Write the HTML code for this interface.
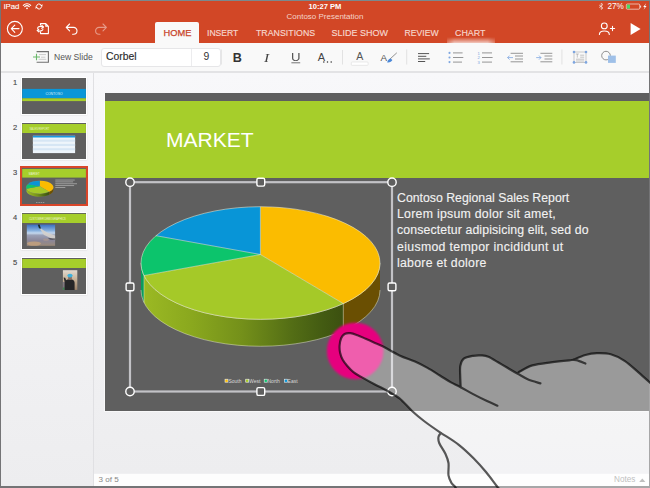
<!DOCTYPE html>
<html><head><meta charset="utf-8">
<style>
*{margin:0;padding:0;box-sizing:border-box}
html,body{width:650px;height:488px;overflow:hidden}
body{background:#747476;position:relative;font-family:"Liberation Sans",sans-serif}
.a{position:absolute}
#hdr{left:1px;top:1px;width:648px;height:41.8px;background:#d24726}
#tb{left:1px;top:42.8px;width:648px;height:28.4px;background:#f9f9f9}
#tbl{left:1px;top:71.2px;width:648px;height:1.6px;background:#e3e3e5}
#panel{left:1px;top:72.8px;width:92px;height:413px;background:linear-gradient(#f8f8fa,#ededef)}
#div{left:93px;top:72.8px;width:1px;height:413px;background:#e0e0e3}
#main{left:94px;top:72.8px;width:555px;height:400px;background:linear-gradient(#f8f8fa,#ededef)}
#bbar{left:94px;top:472.7px;width:555px;height:13.1px;background:#fdfdfd;border-top:1px solid #f0f0f2}
.st{color:#fff;font-size:8px;line-height:1;white-space:nowrap}
.tab{color:#f6d8cf;-webkit-text-stroke:0.15px #f6d8cf;font-size:9.4px;line-height:1;white-space:nowrap;top:28.7px}
.thumb{left:22.2px;width:63.7px;height:36px;background:#5f5f5f;box-shadow:0 0 0 1px #ffffff,0 0.5px 1.5px 1px rgba(0,0,0,0.12)}
.bt{left:397px;font-size:12.3px;color:#f2f2f2;-webkit-text-stroke:0.12px #f2f2f2;line-height:1;white-space:nowrap}
.num{left:13px;font-size:7.5px;color:#4a4a4a;line-height:1;-webkit-text-stroke:0.15px #4a4a4a}
</style></head><body>
<div class="a" style="left:0;top:0;width:650px;height:1px;background:#7a898d"></div>
<div id="hdr" class="a"></div>
<div id="tb" class="a"></div>
<div id="tbl" class="a"></div>
<div id="panel" class="a"></div>
<div id="div" class="a"></div>
<div id="main" class="a"></div>
<div id="bbar" class="a"></div>

<!-- status bar -->
<div class="a st" style="left:3.8px;top:2.9px;font-size:7.8px;-webkit-text-stroke:0.1px #fff">iPad</div>
<div class="a st" style="left:308.5px;top:2.6px;font-weight:bold;font-size:7.6px">10:27 PM</div>
<div class="a st" style="left:286.5px;top:13.2px;font-size:8px;color:#f5d3c8">Contoso Presentation</div>
<div class="a st" style="left:607.4px;top:2.6px;font-size:8.2px">27%</div>

<!-- tabs -->
<div class="a" style="left:447px;top:36.5px;width:47.5px;height:6.3px;background:linear-gradient(rgba(255,255,255,0),rgba(255,255,255,0.7));-webkit-mask-image:linear-gradient(90deg,rgba(0,0,0,0.4),#000 15%,#000 85%,rgba(0,0,0,0.4))"></div>
<div class="a" style="left:155px;top:22.3px;width:43.5px;height:21px;background:#f9f9f9;border-radius:2px 2px 0 0"></div>
<div class="a tab" style="left:163.5px;color:#c8432a;font-size:9.3px;-webkit-text-stroke:0.25px #c8432a">HOME</div>
<div class="a tab" style="left:207px;font-size:8.6px;top:29.2px">INSERT</div>
<div class="a tab" style="left:256px;font-size:8.8px;top:29.1px">TRANSITIONS</div>
<div class="a tab" style="left:331.6px;font-size:9px;top:29px">SLIDE SHOW</div>
<div class="a tab" style="left:404.5px;font-size:8.65px;top:29.2px">REVIEW</div>
<div class="a tab" style="left:455px;font-size:8.9px;top:29px">CHART</div>

<!-- toolbar -->
<div class="a" style="left:54px;top:53.1px;font-size:8.6px;color:#555;line-height:1;white-space:nowrap">New Slide</div>
<div class="a" style="left:101px;top:47.6px;width:119.6px;height:19.8px;background:#fff;border:1px solid #e6e6e8;border-radius:3px"></div>
<div class="a" style="left:191px;top:48.6px;width:1px;height:17.8px;background:#ececee"></div>
<div class="a" style="left:106px;top:52.3px;font-size:10.4px;color:#2a2a2a;-webkit-text-stroke:0.15px #2a2a2a;line-height:1">Corbel</div>
<div class="a" style="left:203.4px;top:52.3px;font-size:10.4px;color:#333;line-height:1">9</div>


<!-- toolbar icons -->
<div class="a" style="left:232.8px;top:51.6px;font-size:12.6px;font-weight:bold;color:#333;line-height:1">B</div>
<div class="a" style="left:263.6px;top:51.4px;font-size:13px;font-style:italic;font-family:'Liberation Serif',serif;color:#444;transform:scaleX(1.2);transform-origin:0 0;line-height:1">I</div>
<div class="a" style="left:290.8px;top:51.7px;font-size:11.2px;color:#555;line-height:1;transform:scaleX(1.18);transform-origin:0 0">U</div>
<div class="a" style="left:317.8px;top:52px;font-size:11px;color:#444;line-height:1">A</div>
<div class="a" style="left:356.3px;top:50.6px;font-size:10.6px;color:#555;line-height:1">A</div>
<div class="a" style="left:380.6px;top:53.2px;font-size:9.8px;color:#555;line-height:1">A</div>
<svg class="a" style="left:0;top:0" width="650" height="488" viewBox="0 0 650 488">
<rect x="221" y="49.5" width="1" height="15" fill="#e6e6e6"/>
<rect x="342" y="50" width="1" height="14.5" fill="#e2e2e2"/>
<rect x="406.2" y="49.5" width="1" height="15" fill="#e2e2e2"/>
<rect x="561.4" y="49.5" width="1" height="15" fill="#e2e2e2"/>
<path d="M291.4 62.8H300.2" stroke="#666" stroke-width="0.9"/>
<g fill="#333"><circle cx="323.8" cy="62.1" r="0.75"/><circle cx="327.5" cy="62.1" r="0.75"/><circle cx="331.2" cy="62.1" r="0.75"/></g>
<rect x="351.3" y="62" width="16.8" height="3.3" rx="0.8" fill="#fff" stroke="#dcdcdc" stroke-width="0.6"/>
<path d="M388.5 60.4L396.8 52.8" stroke="#777" stroke-width="0.8"/>
<path d="M387.2 62.4C387.6 60.3 388.6 59 390.6 58.4L392.4 60.1C391.6 62 389.6 62.6 387.2 62.4Z" fill="#4a88d8"/>
<g stroke="#555" stroke-width="1">
<path d="M418 53.6H429.1 M418 56.3H426.3 M418 58.9H429.8 M418 61.5H425.2"/>
</g>
<g stroke="#8a8a8a" stroke-width="0.9">
<path d="M453 52.9H462.6 M453 57.5H463.3 M453 62.1H462 M482 52.9H492 M482 57.5H492.6 M482 62.1H492"/>
<path d="M510.6 53.3H523 M515 56H523 M515 59H523 M510.6 61.8H523"/>
<path d="M540.4 53.3H552.3 M544.5 56H552.3 M544.5 59H552.3 M540.4 61.8H552.3"/>
</g>
<g fill="#7ea6e0"><circle cx="449.5" cy="52.9" r="1.05"/><circle cx="449.5" cy="57.5" r="1.05"/><circle cx="449.5" cy="62.1" r="1.05"/></g>
<g font-family="Liberation Sans" font-size="4.2" fill="#7ea6e0"><text x="477.5" y="54.5">1</text><text x="477.5" y="59.1">2</text><text x="477.5" y="63.7">3</text></g>
<g fill="none" stroke="#7ea6e0" stroke-width="0.8"><path d="M513 57.6H507.6 M509.6 55.6L507.6 57.6L509.6 59.6"/><path d="M536.2 57.6H541 M539 55.6L541 57.6L539 59.6"/></g>
<rect x="574" y="52" width="12" height="10.4" fill="none" stroke="#a8a8a8" stroke-width="0.6"/>
<g fill="#7ea6e0"><circle cx="574" cy="52" r="1.3"/><circle cx="586" cy="52" r="1.3"/><circle cx="574" cy="62.4" r="1.3"/><circle cx="586" cy="62.4" r="1.3"/></g>
<path d="M575.8 54H578.8 M577.3 54V57.6 M580.2 55.2H584.2 M580.2 57.2H584.2 M576 59.2H584.2 M576 61H584.2" stroke="#8c8c8c" stroke-width="0.5"/>
<circle cx="606" cy="55.6" r="4.3" fill="none" stroke="#777" stroke-width="0.8"/>
<rect x="608" y="55.6" width="7.8" height="7.3" fill="#9fc0e8"/>
</svg>
<div class="a" style="left:98.6px;top:476.2px;font-size:8.1px;color:#888;line-height:1">3 of 5</div>
<div class="a" style="left:614px;top:476.2px;font-size:8.2px;color:#9a9a9a;line-height:1">Notes</div>
<svg class="a" style="left:0;top:0" width="650" height="488"><polygon points="639.2,482 642.3,478.5 645.4,482" fill="#9a9a9a"/></svg>

<!-- thumbnails -->
<div class="a num" style="top:78.6px">1</div>
<div class="a num" style="top:124.2px">2</div>
<div class="a num" style="top:168.8px">3</div>
<div class="a num" style="top:213.6px">4</div>
<div class="a num" style="top:258.6px">5</div>

<div class="a thumb" style="top:78.2px"></div>
<div class="a thumb" style="top:123px"></div>
<div class="a" style="left:19.7px;top:165.5px;width:68.6px;height:40.9px;border:2px solid #d9462a;background:#fff"></div>
<div class="a thumb" style="top:168px;box-shadow:none"></div>
<div class="a thumb" style="top:213px"></div>
<div class="a thumb" style="top:258px"></div>


<svg class="a" style="left:0;top:0" width="650" height="488" viewBox="0 0 650 488">
<defs>
<linearGradient id="sky" x1="0" y1="0" x2="0" y2="1"><stop offset="0" stop-color="#3a6fc0"/><stop offset="0.28" stop-color="#86b0de"/><stop offset="0.4" stop-color="#c4d8ee"/><stop offset="0.5" stop-color="#9aa0b6"/><stop offset="0.75" stop-color="#8a8698"/><stop offset="1" stop-color="#9a8a7a"/></linearGradient>
</defs>
<!-- t1 -->
<rect x="22.2" y="88.9" width="63.7" height="9.4" fill="#0a96d8"/>
<rect x="22.2" y="98.3" width="63.7" height="2.8" fill="#a6ce2b"/>
<text x="54" y="95.2" font-family="Liberation Sans" font-size="3.4" fill="#dff0fa" text-anchor="middle">CONTOSO</text>
<!-- t2 -->
<rect x="22.2" y="124" width="63.7" height="9" fill="#a6ce2b"/>
<text x="29.5" y="130" font-family="Liberation Sans" font-size="2.6" fill="#e8f4c8">SALES REPORT</text>
<rect x="32.9" y="135.8" width="42.2" height="17.3" fill="#eef5fb"/>
<rect x="32.9" y="135.8" width="42.2" height="1.7" fill="#1a9ae0"/>
<rect x="32.9" y="139.6" width="42.2" height="2.1" fill="#d6e6f4"/>
<rect x="32.9" y="143.9" width="42.2" height="2.1" fill="#d6e6f4"/>
<rect x="32.9" y="148.2" width="42.2" height="2.1" fill="#d6e6f4"/>
<!-- t3 -->
<rect x="22.2" y="168.9" width="63.7" height="8.7" fill="#a6ce2b"/>
<text x="28.8" y="174.6" font-family="Liberation Sans" font-size="2.6" fill="#eef6d8">MARKET</text>
<use href="#pie" transform="translate(22.2 168) scale(0.1134) translate(-105.5 -93.4)"/>
<g fill="#d0d0d0" opacity="0.6"><rect x="55.3" y="179.6" width="19.4" height="0.9"/><rect x="55.3" y="181.45" width="17.8" height="0.9"/><rect x="55.3" y="183.3" width="21.7" height="0.9"/><rect x="55.3" y="185.15" width="18.8" height="0.9"/><rect x="55.3" y="187" width="10" height="0.9"/></g>
<g fill="#bbb"><rect x="36" y="202.4" width="1.5" height="0.6"/><rect x="38.4" y="202.4" width="1.5" height="0.6"/><rect x="40.6" y="202.4" width="1.5" height="0.6"/><rect x="42.8" y="202.4" width="1.5" height="0.6"/></g>
<!-- t4 -->
<rect x="22.2" y="213.9" width="63.7" height="9.1" fill="#a6ce2b"/>
<text x="29" y="219.6" font-family="Liberation Sans" font-size="2.6" fill="#eef6d8">CUSTOMER DEMOGRAPHICS</text>
<rect x="26.8" y="224.6" width="28.3" height="21.2" fill="url(#sky)"/>
<ellipse cx="34" cy="243.6" rx="7" ry="2.2" fill="#c8a47c" opacity="0.75"/>
<ellipse cx="46" cy="239.8" rx="3" ry="1.2" fill="#b09a88" opacity="0.6"/>
<path d="M39.4 227.6L47 232.6L55.1 235.6V240.2L50 237.8L44 235L40.6 230Z" fill="#d4d0cc" opacity="0.9"/>
<path d="M48 238.2L55.1 238.6V239.8L50 239.6Z" fill="#303034" opacity="0.8"/>
<path d="M37.8 224.8L39.6 224.6L41 228.8L39 228.2Z" fill="#1a2a26"/>
<!-- t5 -->
<rect x="22.2" y="259" width="63.7" height="9" fill="#a6ce2b"/>
<defs><linearGradient id="ph5" x1="0" y1="0" x2="0" y2="1"><stop offset="0" stop-color="#e2dad0"/><stop offset="0.45" stop-color="#c8b49a"/><stop offset="1" stop-color="#9a8068"/></linearGradient></defs>
<rect x="62.9" y="270.2" width="14.4" height="19.7" fill="url(#ph5)"/>
<rect x="62.9" y="282" width="2" height="7.9" fill="#6a6a80" opacity="0.7"/>
<rect x="62.9" y="287.5" width="1.6" height="2.4" fill="#3a8a50"/>
<path d="M64.6 289.9V283C64.6 280.6 66.4 279.2 70 279.2C73.2 279.2 74.6 280.8 74.6 283V289.9Z" fill="#262628"/>
<path d="M63.6 277.4L65.2 277.8L66.6 281.6L64.8 282.4Z" fill="#2a2a2c"/>
<circle cx="70" cy="278" r="2" fill="#8a6e62"/>
<ellipse cx="70" cy="275.6" rx="2.6" ry="1.9" fill="#3fb2dc"/>
</svg>

<!-- slide -->
<div class="a" style="left:105.2px;top:93.4px;width:544px;height:317.4px;background:#5f5f5f;box-shadow:-1px 1px 0 0 rgba(255,255,255,0.55)"></div>
<div class="a" style="left:105.2px;top:101.4px;width:544px;height:76.4px;background:#a6ce2b"></div>
<div class="a" style="left:166px;top:128.6px;font-size:21px;color:#fff;line-height:1;white-space:nowrap">MARKET</div>


<svg class="a" style="left:0;top:0" width="650" height="488" viewBox="0 0 650 488">
<g fill="none" stroke="#fff" stroke-width="1.1" stroke-linecap="round" stroke-linejoin="round">
 <circle cx="14.85" cy="28.85" r="7.5"/>
 <path d="M11.3 28.6H19 M14.8 25.1L11.3 28.6L14.8 32.3"/>
 <path d="M40.5 25V23.6H45.8L48.4 26.3V33.6H40.5V32 M45.8 23.6V26.3H48.4"/>
 <path d="M43.2 27C41.5 26.2 39.8 26.2 38.7 26.8C38 27.2 37.7 27.8 37.6 28.4 M37.4 30.4C39 31.2 40.8 31.2 41.9 30.6C42.6 30.2 42.9 29.6 43 29" />
 <path d="M41.8 25.4L43.4 27L41.8 28.4 M38.8 29.2L37.2 30.4L38.8 31.8"/>
 <path d="M66.6 27.4H73.6A3.4 3.4 0 0 1 73.6 34.2H72.6 M69.6 24L66.2 27.4L69.6 30.8"/>
 <g opacity="0.45"><path d="M106 27.4H99A3.4 3.4 0 0 0 99 34.2H100 M103 24L106.4 27.4L103 30.8"/></g>
 <circle cx="604.3" cy="25.9" r="2.9"/>
 <path d="M599.4 34.4C599.4 29.8 609.3 29.8 609.3 34.4"/>
 <path d="M610.4 28.5H614.6 M612.5 26.4V30.6"/>
</g>
<polygon points="630.6,22.9 640.6,28.9 630.6,34.9" fill="#fff"/>
<!-- status -->
<g fill="none" stroke="#fff" stroke-width="0.9" stroke-linecap="round">
 <path d="M23.3 5.3A5.3 5.3 0 0 1 30.7 5.3 M24.7 6.7A3.3 3.3 0 0 1 29.3 6.7" stroke-width="1.1"/>
 <path d="M36.6 5.9A2.5 2.5 0 0 1 41.2 5.2 M41.4 7.1A2.5 2.5 0 0 1 36.8 7.8" stroke-width="1"/>
 <path d="M599.4 5.2L603 8L601.2 9.4V3.2L603 4.6L599.4 7.4" stroke-width="0.7" opacity="0.8"/>
</g>
<circle cx="27" cy="8.3" r="0.9" fill="#fff"/><polygon points="40.2,5.4 42.6,4.2 42.2,6.9" fill="#fff"/><polygon points="37.8,7.6 35.4,8.8 35.8,6.1" fill="#fff"/>
<rect x="626.3" y="4" width="13.4" height="5.2" rx="1" fill="none" stroke="#fff" stroke-width="0.7" opacity="0.85"/>
<rect x="626.9" y="4.6" width="3.1" height="4" fill="#4cd964"/>
<rect x="640.1" y="5.6" width="1" height="2" fill="#fff" opacity="0.85"/>
<polygon points="646.2,3.2 643.2,7 644.8,7 643.6,9.8 646.6,5.9 645,5.9" fill="#fff"/>
<!-- new slide icon -->
<path d="M36.6 51.6H48.4V62.2H36.6" fill="none" stroke="#707070" stroke-width="1.1"/>
<path d="M39 54.6H46 M41 57.2H45.4 M38.6 59.3H46.2" stroke="#b8b8b8" stroke-width="0.7"/>
<path d="M33 57H40 M36.5 53.8V60.3" stroke="#6cb86c" stroke-width="1.1"/>
</svg>

<div class="a bt" style="top:191.8px;letter-spacing:0px">Contoso Regional Sales Report</div>
<div class="a bt" style="top:208.1px;letter-spacing:0.27px">Lorem ipsum dolor sit amet,</div>
<div class="a bt" style="top:224.4px;letter-spacing:0.12px">consectetur adipisicing elit, sed do</div>
<div class="a bt" style="top:240.7px;letter-spacing:0.33px">eiusmod tempor incididunt ut</div>
<div class="a bt" style="top:257px;letter-spacing:0.26px">labore et dolore</div>
<svg class="a" style="left:0;top:0" width="650" height="488" viewBox="0 0 650 488">
<defs>
<linearGradient id="lgside" x1="141" y1="0" x2="343" y2="0" gradientUnits="userSpaceOnUse">
<stop offset="0" stop-color="#9cba24"/><stop offset="0.25" stop-color="#8aa81e"/><stop offset="0.5" stop-color="#74901a"/><stop offset="0.75" stop-color="#536d15"/><stop offset="0.9" stop-color="#435b12"/><stop offset="1" stop-color="#3c5010"/>
</linearGradient>
<filter id="blur1" x="-20%" y="-20%" width="140%" height="140%"><feGaussianBlur stdDeviation="0.8"/></filter>
</defs>
<g id="pie">
<path d="M141.00 263.00 A119.5 56.3 0 0 0 144.00 275.54 L144.00 302.54 A119.5 56.3 0 0 1 141.00 290.00 Z" fill="#0a9c5c"/>
<path d="M144.00 275.54 A119.5 56.3 0 0 0 343.30 303.59 L343.30 330.59 A119.5 56.3 0 0 1 144.00 302.54 Z" fill="url(#lgside)"/>
<path d="M343.30 303.59 A119.5 56.3 0 0 0 380.00 263.00 L380.00 290.00 A119.5 56.3 0 0 1 343.30 330.59 Z" fill="#6a4f02"/>
<path d="M141.00 263.00 A119.5 56.3 0 0 0 380.00 263.00 M141.00 290.00 A119.5 56.3 0 0 0 380.00 290.00 M343.30 303.59 L343.30 330.59 M144.00 275.54 L144.00 302.54" fill="none" stroke="#e8ecc8" stroke-width="0.6" opacity="0.8"/>
<path d="M260.40 254.50 L260.40 206.70 A119.5 56.3 0 0 1 343.30 303.59 Z" fill="#fbbc00"/>
<path d="M260.40 254.50 L343.30 303.59 A119.5 56.3 0 0 1 144.00 275.54 Z" fill="#a5c928"/>
<path d="M260.40 254.50 L144.00 275.54 A119.5 56.3 0 0 1 156.00 235.69 Z" fill="#0cc46c"/>
<path d="M260.40 254.50 L156.00 235.69 A119.5 56.3 0 0 1 260.40 206.70 Z" fill="#0895d7"/>
<path d="M260.40 254.50 L260.40 206.70 M260.40 254.50 L343.30 303.59 M260.40 254.50 L144.00 275.54 M260.40 254.50 L156.00 235.69" fill="none" stroke="#f4f4dc" stroke-width="0.6" opacity="0.85"/>
<ellipse cx="260.5" cy="263.0" rx="119.5" ry="56.3" fill="none" stroke="#f4f4dc" stroke-width="0.6" opacity="0.85"/>
</g>
<!-- legend -->
<g font-family="Liberation Sans" font-size="5" fill="#d8d8d8" transform="translate(0 0.6)">
<rect x="225" y="378.6" width="3" height="3" fill="#fbbc00" stroke="#eee" stroke-width="0.6"/><text x="228.4" y="382.4">South</text>
<rect x="245.7" y="378.6" width="3" height="3" fill="#a5c928" stroke="#eee" stroke-width="0.6"/><text x="249" y="382.4">West</text>
<rect x="264.2" y="378.6" width="3" height="3" fill="#0cc46c" stroke="#eee" stroke-width="0.6"/><text x="267.5" y="382.4">North</text>
<rect x="284.3" y="378.6" width="3" height="3" fill="#0895d7" stroke="#eee" stroke-width="0.6"/><text x="287.6" y="382.4">East</text>
</g>
<!-- selection -->
<g fill="none" stroke="#c2c2c6" stroke-width="2.2">
<rect x="130" y="182.2" width="262" height="209.3"/>
</g>
<g fill="#5f5f5f" stroke="#fff" stroke-width="1.4">
<circle cx="130" cy="182.2" r="4.2"/><circle cx="392" cy="182.2" r="4.2"/><circle cx="130" cy="391.5" r="4.2"/><circle cx="392" cy="391.5" r="4.2"/>
<rect x="256.9" y="178.3" width="7.8" height="7.8" rx="1.5"/><rect x="256.9" y="387.6" width="7.8" height="7.8" rx="1.5"/>
<rect x="126.1" y="282.95" width="7.8" height="7.8" rx="1.5"/><rect x="388.1" y="282.95" width="7.8" height="7.8" rx="1.5"/>
</g>
<!-- touch -->
<circle cx="355.2" cy="351" r="28.3" fill="#e6007e" filter="url(#blur1)"/>
<!-- hand -->
<path d="M502.0 492.0 C501.1 491.0 499.5 489.5 496.9 486.2 C494.3 482.9 490.0 476.9 486.2 472.3 C482.4 467.7 478.4 463.1 473.8 458.5 C469.2 453.9 464.1 449.0 458.5 444.6 C452.9 440.2 445.8 436.2 440.0 432.3 C434.2 428.4 428.7 424.6 424.0 421.0 C419.3 417.4 415.9 414.5 411.8 410.7 C407.7 406.9 403.6 401.7 399.5 398.4 C395.4 395.1 391.3 393.0 387.2 390.7 C383.1 388.4 379.2 386.8 374.9 384.5 C370.5 382.2 364.7 379.0 361.1 376.9 C357.5 374.8 355.7 373.9 353.4 372.1 C351.1 370.3 349.1 368.1 347.3 366.0 C345.5 363.9 343.9 362.0 342.7 359.8 C341.5 357.6 340.6 355.1 340.1 352.7 C339.6 350.3 339.4 347.9 339.6 345.5 C339.8 343.1 340.3 340.2 341.1 338.3 C341.9 336.4 343.1 334.9 344.6 334.0 C346.2 333.1 348.2 333.0 350.4 333.2 C352.5 333.4 354.9 334.3 357.5 335.2 C360.1 336.1 363.0 337.6 365.7 338.8 C368.4 340.0 371.2 341.2 373.9 342.4 C376.6 343.6 377.8 343.8 382.1 346.0 C386.4 348.2 394.0 352.8 399.5 355.4 C405.0 358.0 410.3 359.5 415.0 361.6 C419.7 363.7 423.4 365.6 427.5 367.9 C431.6 370.2 436.0 373.1 439.9 375.5 C443.8 377.9 447.5 380.4 451.0 382.4 C454.5 384.3 459.1 386.4 460.7 387.2 C460.6 385.2 460.3 379.1 460.2 375.5 C460.1 371.9 459.8 368.6 460.3 365.8 C460.9 363.0 461.4 360.6 463.5 358.9 C465.6 357.2 470.2 356.4 473.2 355.8 C476.2 355.2 479.0 355.2 481.5 355.4 C484.0 355.6 485.6 355.6 488.4 356.8 C491.2 358.0 495.0 360.5 498.1 362.3 C501.2 364.1 503.8 365.6 507.0 367.5 C510.2 369.4 515.6 372.5 517.3 373.5 C519.8 372.1 526.7 367.2 532.3 365.4 C537.9 363.5 544.6 363.2 550.8 362.4 C556.9 361.5 565.2 360.7 569.2 360.3 C573.2 359.9 573.6 360.0 574.5 359.9 C576.3 359.1 581.7 356.1 585.4 355.0 C589.1 353.9 592.7 353.3 596.9 353.2 C601.1 353.1 606.2 353.0 610.8 354.3 C615.4 355.6 620.0 357.8 624.6 360.8 C629.2 363.8 634.3 368.7 638.5 372.3 C642.7 375.9 646.4 379.4 650.0 382.7 C653.6 386.0 658.3 390.4 660.0 392.0 L660 500 L502 500 Z" fill="rgba(255,255,255,0.37)"/>
<g fill="none" stroke="#000" stroke-width="2.2" stroke-linecap="round" opacity="0.64">
<path d="M502.0 492.0 C501.1 491.0 499.5 489.5 496.9 486.2 C494.3 482.9 490.0 476.9 486.2 472.3 C482.4 467.7 478.4 463.1 473.8 458.5 C469.2 453.9 464.1 449.0 458.5 444.6 C452.9 440.2 445.8 436.2 440.0 432.3 C434.2 428.4 428.7 424.6 424.0 421.0 C419.3 417.4 415.9 414.5 411.8 410.7 C407.7 406.9 403.6 401.7 399.5 398.4 C395.4 395.1 391.3 393.0 387.2 390.7 C383.1 388.4 379.2 386.8 374.9 384.5 C370.5 382.2 364.7 379.0 361.1 376.9 C357.5 374.8 355.7 373.9 353.4 372.1 C351.1 370.3 349.1 368.1 347.3 366.0 C345.5 363.9 343.9 362.0 342.7 359.8 C341.5 357.6 340.6 355.1 340.1 352.7 C339.6 350.3 339.4 347.9 339.6 345.5 C339.8 343.1 340.3 340.2 341.1 338.3 C341.9 336.4 343.1 334.9 344.6 334.0 C346.2 333.1 348.2 333.0 350.4 333.2 C352.5 333.4 354.9 334.3 357.5 335.2 C360.1 336.1 363.0 337.6 365.7 338.8 C368.4 340.0 371.2 341.2 373.9 342.4 C376.6 343.6 377.8 343.8 382.1 346.0 C386.4 348.2 394.0 352.8 399.5 355.4 C405.0 358.0 410.3 359.5 415.0 361.6 C419.7 363.7 423.4 365.6 427.5 367.9 C431.6 370.2 436.0 373.1 439.9 375.5 C443.8 377.9 447.5 380.4 451.0 382.4 C454.5 384.3 456.8 385.1 460.7 387.2 C464.6 389.3 470.2 392.6 474.6 394.9 C479.0 397.2 483.2 399.3 487.0 401.1 C490.8 402.9 495.7 404.9 497.4 405.7"/>
<path d="M460.7 387.2 C460.6 385.2 460.3 379.1 460.2 375.5 C460.1 371.9 459.8 368.6 460.3 365.8 C460.9 363.0 461.4 360.6 463.5 358.9 C465.6 357.2 470.2 356.4 473.2 355.8 C476.2 355.2 479.0 355.2 481.5 355.4 C484.0 355.6 485.6 355.6 488.4 356.8 C491.2 358.0 495.0 360.5 498.1 362.3 C501.2 364.1 503.8 365.6 507.0 367.5 C510.2 369.4 513.8 371.6 517.3 373.5 C520.8 375.4 523.9 377.6 527.7 379.2 C531.6 380.8 538.3 382.7 540.4 383.4"/>
<path d="M518.5 372.3 C520.8 371.1 526.9 367.0 532.3 365.4 C537.7 363.8 544.6 363.2 550.8 362.4 C556.9 361.5 565.0 360.7 569.2 360.3 C573.4 359.9 573.5 359.6 576.2 360.1 C578.9 360.6 583.9 362.9 585.4 363.5"/>
<path d="M573.8 359.6 C575.7 358.8 581.5 356.1 585.4 355.0 C589.2 353.9 592.7 353.3 596.9 353.2 C601.1 353.1 606.2 353.0 610.8 354.3 C615.4 355.6 620.0 357.8 624.6 360.8 C629.2 363.8 634.3 368.7 638.5 372.3 C642.7 375.9 646.4 379.4 650.0 382.7 C653.6 386.0 658.3 390.4 660.0 392.0"/>
<path d="M440.8 433.0 C440.4 433.6 438.8 435.2 438.5 436.9 C438.2 438.6 438.1 440.2 439.2 443.0 C440.3 445.8 443.8 450.5 445.4 453.8 C446.9 457.1 448.0 459.4 448.5 463.0 C449.0 466.6 448.0 472.1 448.5 475.4 C449.0 478.7 450.5 481.2 451.5 483.0 C452.5 484.8 453.7 485.0 454.6 486.2 C455.5 487.4 456.6 489.4 457.0 490.0"/>
</g>
</svg>
</body></html>
